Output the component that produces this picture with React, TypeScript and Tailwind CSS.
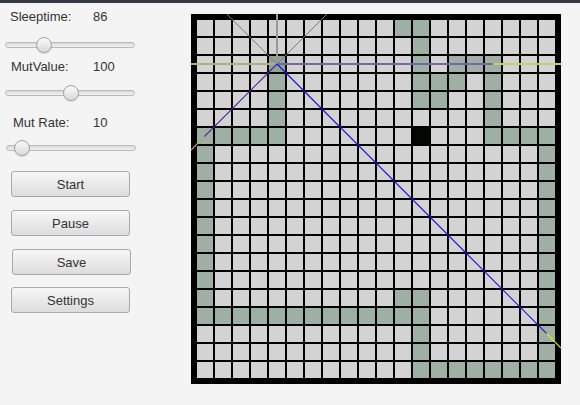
import React from "react";

const GREEN: [number, number][] = [
	// [col, row]
	[4, 3], [4, 4], [4, 5], [4, 6],
	[0, 6], [1, 6], [2, 6], [3, 6],
	[0, 7], [0, 8], [0, 9], [0, 10], [0, 11], [0, 12], [0, 13], [0, 14], [0, 15], [0, 16],
	[1, 16], [2, 16], [3, 16], [4, 16], [5, 16], [6, 16], [7, 16], [8, 16], [9, 16], [10, 16], [11, 16], [12, 16],
	[11, 15], [12, 15],
	[12, 17], [12, 18], [12, 19],
	[13, 19], [14, 19], [15, 19], [16, 19], [17, 19], [18, 19], [19, 19],
	[19, 6], [19, 7], [19, 8], [19, 9], [19, 10], [19, 11], [19, 12], [19, 13], [19, 14], [19, 15], [19, 16], [19, 17], [19, 18],
	[16, 6], [17, 6], [18, 6],
	[16, 2], [16, 3], [16, 4], [16, 5],
	[14, 2], [15, 2], [14, 3], [13, 3], [13, 4],
	[11, 0], [12, 0], [12, 1], [12, 2], [12, 3], [12, 4],
];

const HEAD = "4,2";
const FOOD = "12,6";

const greenSet = new Set(GREEN.map(([c, r]) => `${c},${r}`));

function cellClass(c: number, r: number) {
	const key = `${c},${r}`;
	if (key === HEAD) return "bg-[#8ea596]";
	if (key === FOOD) return "bg-[#020802]";
	if (greenSet.has(key)) return "bg-[#9eb0a4]";
	return "bg-[#d3d3d3]";
}

const Slider: React.FC<{ thumbLeft: number; width: number; ml: number }> = ({
	thumbLeft,
	width,
	ml,
}) => (
	<div className="relative h-4" style={{ width, marginLeft: ml }}>
		<div className="absolute left-0 right-0 top-[5px] h-[6px] rounded-full border border-[#b9b9b9] bg-gradient-to-b from-[#d9d9d9] to-[#f2f2f2]" />
		<div
			className="absolute top-0 h-4 w-4 rounded-full border border-[#a3a3a3] bg-gradient-to-b from-[#fafafa] to-[#d9d9d9] shadow-[0_1px_1px_rgba(0,0,0,0.12)]"
			style={{ left: thumbLeft }}
		/>
	</div>
);

const Btn: React.FC<{ label: string; ml: number; mt: number }> = ({ label, ml, mt }) => (
	<button
		className="flex h-[26px] w-[119px] items-center justify-center rounded-[3px] border border-[#a9a9a9] bg-gradient-to-b from-[#f7f7f7] to-[#dddddd] pt-px text-[13px] text-[#333]"
		style={{ marginLeft: ml, marginTop: mt }}
	>
		{label}
	</button>
);

const Label: React.FC<{ name: string; value: string; ml: number; mt: number }> = ({
	name,
	value,
	ml,
	mt,
}) => (
	<div className="flex h-4 text-[13px] leading-4 text-[#333]" style={{ marginTop: mt }}>
		<span style={{ marginLeft: ml }}>{name}</span>
		<span className="absolute" style={{ left: 93 }}>
			{value}
		</span>
	</div>
);

export default function App() {
	return (
		<div className="h-[405px] w-[580px] overflow-hidden bg-[#f4f4f4] font-['Liberation_Sans',Arial,sans-serif]">
			<div className="h-[3px] bg-[#333944]" />
			<div className="flex">
				<div className="relative flex w-[191px] flex-col">
					<Label name="Sleeptime:" value="86" ml={10} mt={6} />
					<div className="mt-[12px]">
						<Slider thumbLeft={31} width={130} ml={5} />
					</div>
					<Label name="MutValue:" value="100" ml={11} mt={6} />
					<div className="mt-[10px]">
						<Slider thumbLeft={58} width={130} ml={5} />
					</div>
					<Label name="Mut Rate:" value="10" ml={13} mt={14} />
					<div className="mt-[9px]">
						<Slider thumbLeft={8} width={130} ml={6} />
					</div>
					<Btn label="Start" ml={11} mt={15} />
					<Btn label="Pause" ml={11} mt={13} />
					<Btn label="Save" ml={12} mt={13} />
					<Btn label="Settings" ml={11} mt={12} />
				</div>

				<div className="relative mt-[11px] h-[370px] w-[370px] bg-black p-[6px]">
					<div className="grid grid-cols-[repeat(20,16px)] grid-rows-[repeat(20,16px)] gap-[2px]">
						{Array.from({ length: 400 }, (_, i) => {
							const c = i % 20;
							const r = Math.floor(i / 20);
							return <div key={i} className={cellClass(c, r)} />;
						})}
					</div>
					<svg
						className="pointer-events-none absolute left-0 top-0"
						width={370}
						height={370}
						viewBox="0 0 370 370"
					>
						<line x1={86} y1={0} x2={86} y2={50} stroke="#999999" strokeWidth={2} />
						<line x1={86} y1={50} x2={35.7} y2={0} stroke="#7d7d7d" strokeWidth={1} />
						<line x1={86} y1={50} x2={136} y2={0} stroke="#7d7d7d" strokeWidth={1} />
						<line x1={0} y1={50} x2={86} y2={50} stroke="#adb181" strokeWidth={2} />
						<line x1={86} y1={50} x2={302} y2={50} stroke="#7b64a8" strokeWidth={2} />
						<line x1={302} y1={50} x2={370} y2={50} stroke="#cccc66" strokeWidth={2} />
						<line x1={86} y1={50} x2={13.3} y2={122.7} stroke="#5a1e9c" strokeWidth={1.2} />
						<line x1={13.3} y1={122.7} x2={0} y2={136} stroke="#b3b35a" strokeWidth={1.2} />
						<line x1={86} y1={50} x2={355.7} y2={319.7} stroke="#1c1cd6" strokeWidth={1.2} />
						<line x1={355.7} y1={319.7} x2={370} y2={334} stroke="#e4e410" strokeWidth={1.2} />
					</svg>
				</div>
			</div>
		</div>
	);
}
